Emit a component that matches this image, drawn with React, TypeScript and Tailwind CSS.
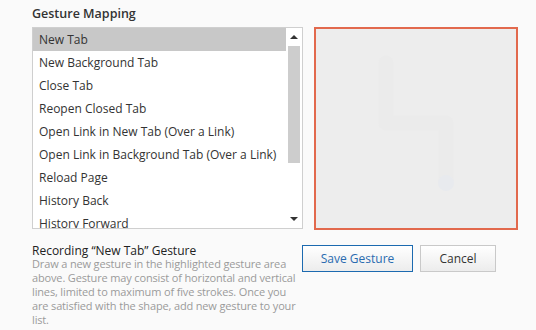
import React from 'react';

const actions = [
  'New Tab',
  'New Background Tab',
  'Close Tab',
  'Reopen Closed Tab',
  'Open Link in New Tab (Over a Link)',
  'Open Link in Background Tab (Over a Link)',
  'Reload Page',
  'History Back',
  'History Forward',
];

function ScrollBar() {
  return (
    <div className="flex w-[16px] shrink-0 flex-col items-center bg-white">
      <div className="flex h-[18px] w-full items-center justify-center">
        <div className="h-0 w-0 border-x-[4px] border-b-[4px] border-x-transparent border-b-[#333]" />
      </div>
      <div className="h-[117px] w-[12px] bg-[#cdcdcd]" />
      <div className="flex-1" />
      <div className="flex h-[18px] w-full items-center justify-center">
        <div className="h-0 w-0 border-x-[4px] border-t-[4px] border-x-transparent border-t-[#333]" />
      </div>
    </div>
  );
}

function GestureList() {
  return (
    <div className="flex h-[202px] w-[271px] shrink-0 overflow-hidden border border-[#cfcfcf] bg-white">
      <ul className="flex-1 overflow-hidden">
        {actions.map((name, i) => (
          <li
            key={name}
            className={`h-[23px] whitespace-nowrap pl-[6px] text-[12px] leading-[23px] text-[#333] ${
              i === 0 ? 'bg-[#c8c8c8]' : ''
            }`}
          >
            {name}
          </li>
        ))}
      </ul>
      <ScrollBar />
    </div>
  );
}

function GestureCanvas() {
  return (
    <div className="h-[203px] w-[204px] shrink-0 border-2 border-[#e2694d] bg-[#ededed]">
      <svg width="200" height="199" viewBox="0 0 200 199">
        <polyline
          points="70,34 70,94 130,94 130,154"
          fill="none"
          stroke="#ebebeb"
          strokeWidth="15"
          strokeLinecap="round"
          strokeLinejoin="round"
        />
        <circle cx="130" cy="154" r="8" fill="#e8eaee" />
      </svg>
    </div>
  );
}

export default function App() {
  return (
    <div className="min-h-[330px] w-[536px] bg-[#fafafa] pl-[32px] pt-[5px] font-['Segoe_UI','Open_Sans',sans-serif]">
      <h2 className="text-[12.5px] font-semibold leading-[18px] text-[#333]">Gesture Mapping</h2>
      <div className="mt-[4px] flex gap-[11px]">
        <GestureList />
        <GestureCanvas />
      </div>
      <div className="mt-[15px] flex items-start">
        <div className="mt-[-1px] w-[271px] shrink-0">
          <h3 className="text-[12px] leading-[13px] text-[#222]">Recording “New Tab” Gesture</h3>
          <p className="text-[11px] leading-[14px] tracking-[-0.15px] text-[#9a9a9a]">
            Draw a new gesture in the highlighted gesture area above. Gesture may consist of horizontal and vertical
            lines, limited to maximum of five strokes. Once you are satisfied with the shape, add new gesture to your
            list.
          </p>
        </div>
        <div className="ml-[-1px] flex gap-[7px]">
          <button className="h-[27px] w-[111px] border border-[#1c6ab0] bg-gradient-to-b from-white to-[#ececec] text-[12px] text-[#2a6bb0]">
            Save Gesture
          </button>
          <button className="h-[27px] w-[76px] border border-[#c9c9c9] bg-gradient-to-b from-white to-[#ececec] text-[12px] text-[#333]">
            Cancel
          </button>
        </div>
      </div>
    </div>
  );
}
